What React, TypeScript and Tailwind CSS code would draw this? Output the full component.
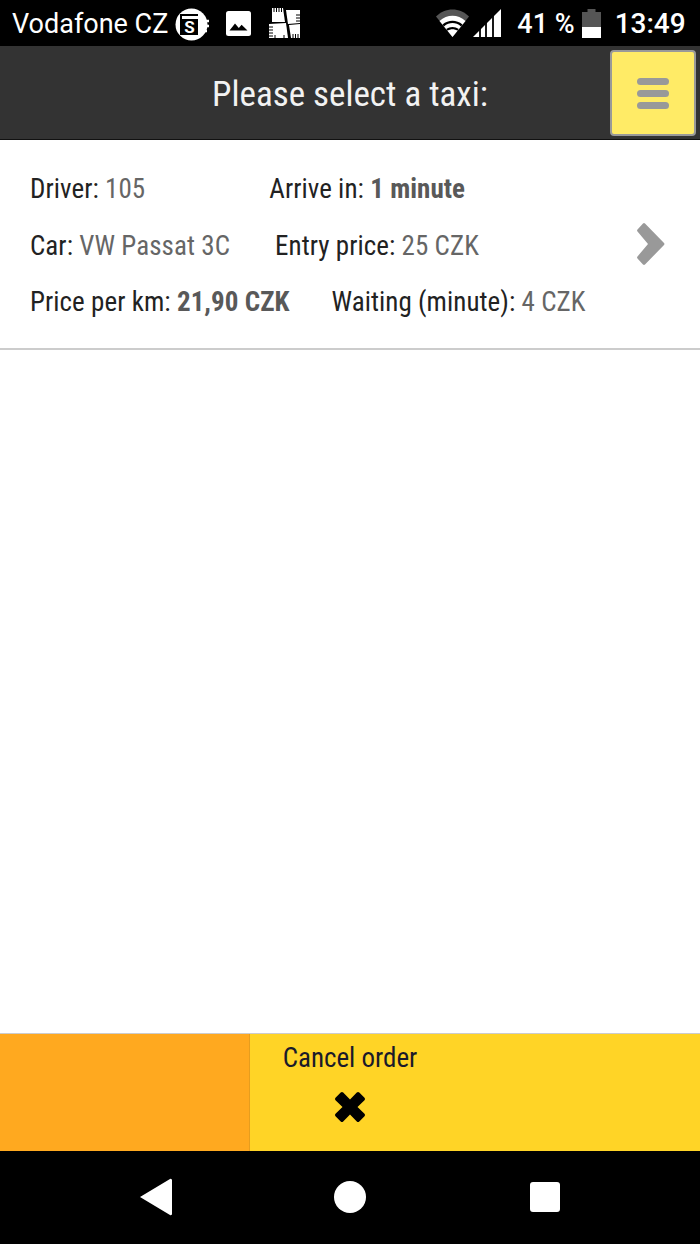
import React from "react";

const Row = ({ gap, children }: { gap: string; children: React.ReactNode }) => (
  <div className={`flex h-[56.5px] items-center whitespace-nowrap ${gap}`}>{children}</div>
);

const Val = ({ children, bold }: { children: React.ReactNode; bold?: boolean }) => (
  <span className={bold ? "font-bold text-[#595959]" : "text-[#666666]"}>{children}</span>
);

export default function App() {
  return (
    <div className="flex h-[1244px] w-[700px] flex-col bg-white font-['Roboto','Liberation_Sans',sans-serif]">
      <div className="flex h-[46px] shrink-0 items-center whitespace-nowrap bg-black pl-3 text-white">
        <span className="mt-[2px] shrink-0 text-[27px] leading-none">Vodafone CZ</span>
        <svg className="ml-[7px] mt-[2px] shrink-0" width="34" height="33" viewBox="0 0 34 33">
          <circle cx="16.500" cy="16.500" r="16" fill="#fff" />
          <rect x="5" y="6" width="18" height="21" fill="#000" />
          <rect x="7" y="8" width="16" height="3" fill="#fff" />
          <text x="14.500" y="24.500" textAnchor="middle" fontSize="17" fontWeight="700" fill="#fff" fontFamily="Roboto">S</text>
          <path d="M23 13h11M23 18h11M23 23h9" stroke="#fff" strokeWidth="2.600" />
        </svg>
        <svg className="ml-[17px] shrink-0" width="25" height="25" viewBox="0 0 25 25">
          <rect width="25" height="25" rx="2.500" fill="#fff" />
          <path d="M3.500 19.500l5.500-7 3.800 4.500 2.800-3.200 5.900 5.700z" fill="#000" />
        </svg>
        <svg className="ml-[18px] shrink-0" width="32" height="31" viewBox="0 0 32 31">
          <path d="M3 0h11l2 14H3z" fill="#fff" />
          <path d="M17 2h14v13l-12 1z" fill="#fff" />
          <path d="M0 16l17-1 2 15H0z" fill="#fff" />
          <path d="M20 17l11-1v14H22z" fill="#fff" />
          <path d="M5 0v4M7.500 0v4M10 0v4M12.500 0v4M27 7h4M27 10h4M27 13h4M0 19h4M0 22h4M0 25h4M0 28h4M24 26v5M26.500 26v5M29 26v5M6 27v4M15 27v4" stroke="#000" strokeWidth="1" />
        </svg>
        <svg className="ml-[135px] shrink-0" width="33" height="28" viewBox="0 0 33 28">
          <path d="M0 7.500C9 -2 24 -2 33 7.500L16.500 28z" fill="#555" />
          <path d="M3.500 12C11 5 22 5 29.500 12L16.500 28z" fill="#fff" />
          <path d="M6.500 15.500C12.500 10.500 20.500 10.500 26.500 15.500L25 17.400C19.500 13 13.500 13 8 17.400z" fill="#000" />
          <path d="M10.200 20C14 17.200 19 17.200 22.800 20L21.400 21.800C18.500 19.800 14.500 19.800 11.600 21.800z" fill="#000" />
        </svg>
        <svg className="ml-[4px] shrink-0" width="28" height="28" viewBox="0 0 28 28">
          <path d="M0 28L28 0v28z" fill="#fff" />
          <path d="M7 20v8M13 14v14M20 7v21" stroke="#000" strokeWidth="1.800" />
        </svg>
        <span className="ml-[16px] mt-[2px] shrink-0 text-[27px] font-medium leading-none">41 %</span>
        <svg className="ml-[7px] shrink-0" width="19" height="29" viewBox="0 0 19 29">
          <path d="M5.500 0h8v3h5.500v26H0V3h5.500z" fill="#555" />
          <rect x="0" y="18" width="19" height="11" fill="#fff" />
        </svg>
        <span className="ml-[14px] mt-[2px] shrink-0 text-[28px] font-medium leading-none">13:49</span>
      </div>

      <div className="relative flex h-[94px] shrink-0 items-center justify-center border-b border-[#111111] bg-[#333333] [font-stretch:75%]">
        <h1 className="mt-[6px] text-[35px] font-normal text-[#f2f2f2]">Please select a taxi:</h1>
        <button className="absolute right-[4px] top-[4px] flex h-[86px] w-[86px] flex-col items-center justify-center gap-[5px] rounded-[4px] border-2 border-[#999999] bg-[#ffeb66]">
          <span className="h-[7px] w-[32px] rounded-full bg-[#999999]" />
          <span className="h-[7px] w-[32px] rounded-full bg-[#999999]" />
          <span className="h-[7px] w-[32px] rounded-full bg-[#999999]" />
        </button>
      </div>

      <div className="relative flex h-[210px] shrink-0 flex-col border-b-2 border-[#cccccc] pl-[30px] pt-[21px] text-[27px] tracking-[0.06px] text-[#222222] [font-stretch:75%]">
        <Row gap="gap-[124px]">
          <span>Driver: <Val>105</Val></span>
          <span>Arrive in: <Val bold>1 minute</Val></span>
        </Row>
        <Row gap="gap-[45px]">
          <span>Car: <Val>VW Passat 3C</Val></span>
          <span>Entry price: <Val>25 CZK</Val></span>
        </Row>
        <Row gap="gap-[42px]">
          <span>Price per km: <Val bold>21,90 CZK</Val></span>
          <span>Waiting (minute): <Val>4 CZK</Val></span>
        </Row>
        <svg className="absolute left-[636px] top-[82px]" width="30" height="44" viewBox="0 0 30 44">
          <path d="M1.500 7.500L7 1.500a1.500 1.500 0 0 1 2 0L28 21a1.500 1.500 0 0 1 0 2L9 42.500a1.500 1.500 0 0 1-2 0L1.500 36.500a1.500 1.500 0 0 1 0-2L12 22 1.500 9.500a1.500 1.500 0 0 1 0-2z" fill="#999999" />
        </svg>
      </div>

      <div className="flex-1" />

      <div className="flex h-[118px] shrink-0 border-t border-[#cccccc] [font-stretch:75%]">
        <div className="w-[250px] border-r border-[#e69d1d] bg-[#ffa91f]" />
        <div className="flex flex-1 bg-[#ffd426]">
          <div className="flex w-[200px] flex-col items-center pt-[7px]">
            <span className="text-[27px] leading-[34px] text-[#1a1a2a]">Cancel order</span>
            <svg className="mt-[16px]" width="32" height="32" viewBox="0 0 32 32">
              <path d="M16 8.500L22.800 1.500a1.800 1.800 0 0 1 2.500 0l5.200 5.200a1.800 1.800 0 0 1 0 2.500L23.500 16l7 6.800a1.800 1.800 0 0 1 0 2.500l-5.200 5.200a1.800 1.800 0 0 1-2.500 0L16 23.500l-6.800 7a1.800 1.800 0 0 1-2.500 0l-5.200-5.200a1.800 1.800 0 0 1 0-2.500L8.500 16l-7-6.800a1.800 1.800 0 0 1 0-2.500l5.200-5.200a1.800 1.800 0 0 1 2.500 0z" fill="#000" />
            </svg>
          </div>
        </div>
      </div>

      <div className="flex h-[93px] shrink-0 items-center bg-black pl-[140px]">
        <svg width="32" height="38" viewBox="0 0 32 38" className="-mt-[1px]">
          <path d="M0 19L30 1a1.300 1.300 0 0 1 2 1v34a1.300 1.300 0 0 1-2 1z" fill="#fff" />
        </svg>
        <div className="ml-[162px] -mt-[1px] h-[32px] w-[32px] rounded-full bg-white" />
        <div className="ml-[164px] -mt-[1px] h-[30px] w-[30px] rounded-[3px] bg-white" />
      </div>
    </div>
  );
}
